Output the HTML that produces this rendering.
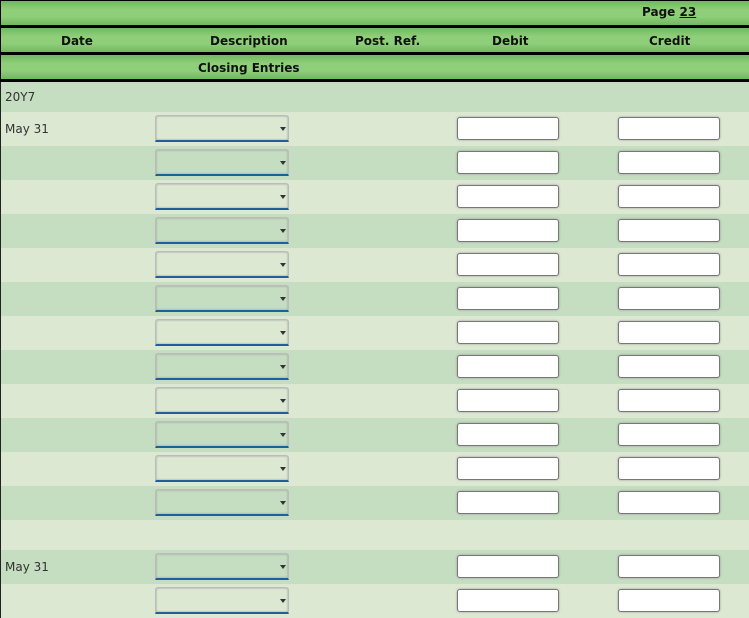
<!DOCTYPE html>
<html><head><style>
*{margin:0;padding:0;box-sizing:border-box}
body{width:749px;height:618px;overflow:hidden;background:#dde8d3;font-family:"DejaVu Sans","Liberation Sans",sans-serif;position:relative}
.g{position:absolute;left:0;width:749px;background:linear-gradient(#6fb85f,#8fcf7a 35%,#8fcf7a 65%,#6fb85f);box-shadow:inset 1px 0 0 #000}
.k{position:absolute;left:0;width:749px;background:#000}
.h{position:absolute;font-weight:bold;font-size:12px;color:#111;top:6px}
.r{position:absolute;left:0;width:749px;box-shadow:inset 1px 0 0 #222}
.d{background:#c5ddc0}.l{background:#dde8d3}
.t{position:absolute;left:5px;font-size:12px;color:#333}
.s{position:absolute;left:155px;width:134px;height:27px;border:1px solid #bbb;border-bottom:2px solid #1f5f9a;border-radius:3px 3px 0 0;box-shadow:inset 0 0 2px #999}
.s:after{content:"";position:absolute;right:2px;top:11px;border-left:3.5px solid transparent;border-right:3.5px solid transparent;border-top:4px solid #333}
.i{position:absolute;width:102px;height:23px;background:#fff;border:1px solid #777;border-radius:3px;box-shadow:0 0 2px #999}
</style></head><body>
<div class="k" style="top:0;height:1px"></div>
<div class="g" style="top:1px;height:24px"><span class="h" style="left:642px;top:4px">Page <u>23</u></span></div>
<div class="k" style="top:25px;height:3px"></div>
<div class="g" style="top:28px;height:24px">
<span class="h" style="left:61px">Date</span><span class="h" style="left:210px">Description</span><span class="h" style="left:355px">Post. Ref.</span><span class="h" style="left:492px">Debit</span><span class="h" style="left:649px">Credit</span></div>
<div class="k" style="top:52px;height:3px"></div>
<div class="g" style="top:55px;height:24px"><span class="h" style="left:198px">Closing Entries</span></div>
<div class="k" style="top:79px;height:3px"></div>
<div class="r d" style="top:82px;height:30px"><span class="t" style="top:8px">20Y7</span></div>
<div id="rows"></div>
<script>
var h='',tops=[112,146,180,214,248,282,316,350,384,418,452,486];
tops.forEach(function(t,i){h+='<div class="r '+(i%2?'d':'l')+'" style="top:'+t+'px;height:34px">'+(i==0?'<span class="t" style="top:10px">May 31</span>':'')+'<div class="s" style="top:3px"></div><div class="i" style="left:457px;top:5px"></div><div class="i" style="left:618px;top:5px"></div></div>';});
h+='<div class="r l" style="top:520px;height:30px"></div>';
[550,584].forEach(function(t,i){h+='<div class="r '+(i?'l':'d')+'" style="top:'+t+'px;height:34px">'+(i==0?'<span class="t" style="top:10px">May 31</span>':'')+'<div class="s" style="top:3px"></div><div class="i" style="left:457px;top:5px"></div><div class="i" style="left:618px;top:5px"></div></div>';});
document.getElementById('rows').outerHTML=h;
</script>
</body></html>
